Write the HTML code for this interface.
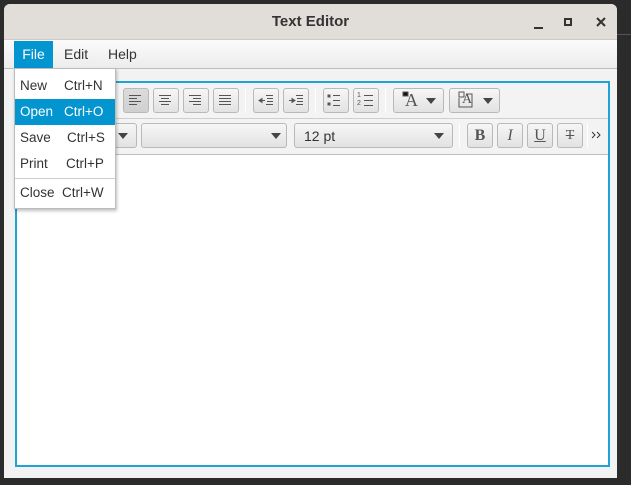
<!DOCTYPE html>
<html><head><style>
*{box-sizing:border-box;margin:0;padding:0}
body{width:631px;height:485px;background:#2b2b2b;position:relative;overflow:hidden;font-family:"Liberation Sans",sans-serif;font-size:13px;color:#333}
.abs{position:absolute}
.win{left:4px;top:4px;width:613px;height:474px;background:#f2f2f2;border-radius:6px 6px 0 0;overflow:hidden}
.title{left:0;top:0;width:613px;height:36px;background:#e1ded9;border-bottom:1px solid #cfcbc6}
.menubar{left:0;top:36px;width:613px;height:29px;background:linear-gradient(#fbfbfb,#ececec);border-bottom:1px solid #bdbdbd}
.btn{position:absolute;height:25px;border:1px solid #b9b9b9;border-radius:3px;background:linear-gradient(#f6f6f6,#e2e2e2)}
.sep{position:absolute;width:1px;height:25px;background:#cfcfcf;border-right:1px solid #fff}
.tri{position:absolute;width:0;height:0;border-left:5px solid transparent;border-right:5px solid transparent;border-top:6px solid #444}
.mi{position:absolute;left:0;width:100px;height:26px;line-height:26px;font-size:13.5px}
.mi span{position:absolute;left:5px}.mi b{position:absolute;left:49px;font-weight:normal}
</style></head><body>
<div class="abs" style="left:617px;top:34px;width:14px;height:1px;background:#555"></div>
<div class="abs win">
 <div class="abs title"><div class="abs" style="left:0;width:613px;top:9px;text-align:center;font-weight:bold;font-size:15px;color:#333">Text Editor</div>
  <div class="abs" style="left:530px;top:23px;width:9px;height:2px;background:#333"></div>
  <div class="abs" style="left:560px;top:14px;width:8px;height:8px;border:2px solid #333"></div>
  <svg class="abs" style="left:592px;top:13px" width="10" height="10"><path d="M1 1l8 8M9 1l-8 8" stroke="#333" stroke-width="2"/></svg>
 </div>
 <div class="abs menubar">
  <div class="abs" style="left:10px;top:1px;width:39px;height:27px;background:#0395d0;color:#fff;line-height:27px;text-align:center;font-size:14px">File</div>
  <div class="abs" style="left:60px;top:6px;font-size:14px">Edit</div>
  <div class="abs" style="left:104px;top:6px;font-size:14px">Help</div>
 </div>
 <div class="abs" style="left:11px;top:77px;width:595px;height:386px;background:#fff;border:2px solid #1fa3d6">
  <div class="abs" style="left:0;top:0;width:591px;height:72px;background:#f3f3f3;border-bottom:1px solid #bdbdbd"></div>
  <div class="abs" style="left:0;top:35px;width:591px;height:1px;background:#cfcfcf"></div>
 </div>
</div>
<div class="btn" style="left:123px;top:88px;width:26px;background:linear-gradient(#dcdcdc,#d0d0d0)"></div>
<div class="btn" style="left:153px;top:88px;width:26px"></div>
<div class="btn" style="left:183px;top:88px;width:26px"></div>
<div class="btn" style="left:213px;top:88px;width:26px"></div>
<div class="sep" style="left:245px;top:88px"></div>
<div class="btn" style="left:253px;top:88px;width:26px"></div>
<div class="btn" style="left:283px;top:88px;width:26px"></div>
<div class="sep" style="left:315px;top:88px"></div>
<div class="btn" style="left:323px;top:88px;width:26px"></div>
<div class="btn" style="left:353px;top:88px;width:26px"></div>
<div class="sep" style="left:385px;top:88px"></div>
<div class="btn" style="left:393px;top:88px;width:51px"></div>
<div class="btn" style="left:449px;top:88px;width:51px"></div>
<svg class="abs" style="left:0;top:0" width="631" height="485" stroke="#555" stroke-width="1" fill="none">
 <path d="M129 95.5h12M129 98.5h8M129 101.5h12M129 104.5h8"/>
 <path d="M159 95.5h12M161 98.5h8M159 101.5h12M161 104.5h8"/>
 <path d="M189 95.5h12M193 98.5h8M189 101.5h12M193 104.5h8"/>
 <path d="M219 95.5h12M219 98.5h12M219 101.5h12M219 104.5h12"/>
 <path d="M259 100.5h6M266 95.5h7M267 98.5h6M267 101.5h6M266 104.5h7"/><path d="M259 100.5l3-2v4z" fill="#555"/>
 <path d="M289 100.5h6M296 95.5h7M297 98.5h6M297 101.5h6M296 104.5h7"/><path d="M295 100.5l-3-2v4z" fill="#555"/>
 <path d="M333 95.5h7M333 100.5h7M333 105.5h7"/><rect x="328" y="95" width="2" height="2" fill="#555"/><rect x="328" y="103" width="2" height="2" fill="#555"/>
 <path d="M364 95.5h9M364 100.5h9M364 105.5h9"/>
 <rect x="403" y="92" width="5" height="4" fill="#111"/>
 <rect x="459" y="92" width="5" height="5"/><path d="M459 98v9h13v-13h-6"/>
 <path d="M592 132l3 3-3 3M597 132l3 3-3 3" stroke="#333"/>
</svg>
<div class="abs" style="left:357px;top:92px;font-size:7px;line-height:8px;color:#555">1<br>2</div>
<div class="abs" style="left:405px;top:90px;font-family:'Liberation Serif',serif;font-size:18px;color:#555">A</div>
<div class="tri" style="left:426px;top:98px"></div>
<div class="abs" style="left:462px;top:92px;font-family:'Liberation Serif',serif;font-size:14px;color:#555">A</div>
<div class="tri" style="left:483px;top:98px"></div>
<div class="btn" style="left:100px;top:123px;width:37px"></div><div class="tri" style="left:118px;top:133px"></div>
<div class="btn" style="left:141px;top:123px;width:146px"></div><div class="tri" style="left:271px;top:133px"></div>
<div class="btn" style="left:294px;top:123px;width:159px"></div><div class="tri" style="left:434px;top:133px"></div>
<div class="abs" style="left:304px;top:128px;font-size:14px">12 pt</div>
<div class="sep" style="left:459px;top:123px"></div>
<div class="btn" style="left:467px;top:123px;width:26px;text-align:center;font:bold 16px 'Liberation Serif',serif;line-height:23px;color:#555">B</div>
<div class="btn" style="left:497px;top:123px;width:26px;text-align:center;font:italic 16px 'Liberation Serif',serif;line-height:23px;color:#555">I</div>
<div class="btn" style="left:527px;top:123px;width:26px;text-align:center;font:16px 'Liberation Serif',serif;line-height:23px;color:#555;text-decoration:underline">U</div>
<div class="btn" style="left:557px;top:123px;width:26px;text-align:center;font:14px 'Liberation Serif',serif;line-height:23px;color:#555;text-decoration:line-through">T</div>
<div class="sep" style="left:587px;top:123px"></div>
<div class="abs" style="left:14px;top:68px;width:102px;height:141px;background:#fff;border:1px solid #bcbcbc;box-shadow:1px 2px 3px rgba(0,0,0,.25)">
 <div class="mi" style="top:4px"><span>New</span><b>Ctrl+N</b></div>
 <div class="mi" style="top:30px;background:#0395d0;color:#fff"><span>Open</span><b>Ctrl+O</b></div>
 <div class="mi" style="top:56px"><span>Save</span><b style="left:52px">Ctrl+S</b></div>
 <div class="mi" style="top:82px"><span>Print</span><b style="left:51px">Ctrl+P</b></div>
 <div class="abs" style="left:0;top:109px;width:100px;height:1px;background:#ccc"></div>
 <div class="mi" style="top:111px"><span>Close</span><b style="left:47px">Ctrl+W</b></div>
</div>
</body></html>
